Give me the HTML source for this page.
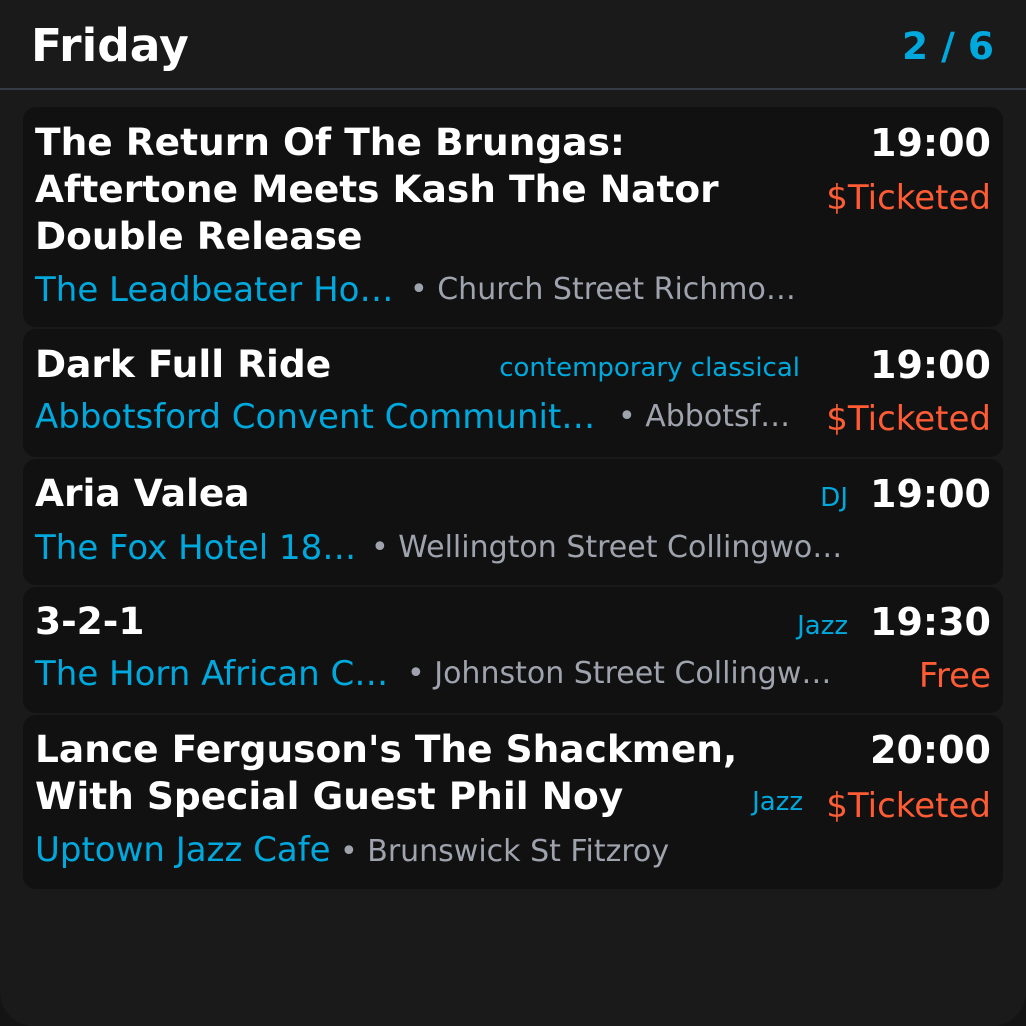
<!DOCTYPE html>
<html><head><meta charset="utf-8"><style>
html,body{margin:0;padding:0;background:#141414;}
#app{position:relative;width:1026px;height:1026px;background:#1a1a1a;border-radius:0 0 34px 34px;overflow:hidden;font-family:"DejaVu Sans","Liberation Sans",sans-serif;}
.hl{position:absolute;left:0;right:0;top:88px;height:2px;background:#363c47;}
.card{position:absolute;left:23px;width:980px;background:#111111;border-radius:13px;}
.t{position:absolute;white-space:nowrap;line-height:normal;}
.b{font-weight:bold;color:#fff;}
.ti{font-size:37.5px;}
.tm{font-size:38px;right:35px;}
.v{font-size:34px;color:#00a9dd;}
.a{font-size:30px;color:#9ea3ad;}
.p{font-size:34px;color:#ff5b35;right:35px;}
.g{font-size:26px;color:#00a9dd;}
</style></head><body><div id="app">
<div class="t b" style="left:31px;top:19px;font-size:45.5px;">Friday</div>
<div class="t b" style="right:32px;top:24px;font-size:37.5px;color:#00a9dd;">2 / 6</div>
<div class="hl"></div>

<div class="card" style="top:107px;height:220px"></div>
<div class="card" style="top:329px;height:128px"></div>
<div class="card" style="top:459px;height:126px"></div>
<div class="card" style="top:587px;height:126px"></div>
<div class="card" style="top:715px;height:174px"></div>

<div class="t b ti" style="left:35px;top:120px">The Return Of The Brungas:</div>
<div class="t b ti" style="left:35px;top:167px">Aftertone Meets Kash The Nator</div>
<div class="t b ti" style="left:35px;top:214px">Double Release</div>
<div class="t b tm" style="top:121px">19:00</div>
<div class="t p" style="top:178px">$Ticketed</div>
<div class="t v" style="left:35px;top:270px">The Leadbeater Ho…</div>
<div class="t a" style="left:410px;top:272px">• Church Street Richmo…</div>

<div class="t b ti" style="left:35px;top:342px">Dark Full Ride</div>
<div class="t g" style="right:226px;top:353px">contemporary classical</div>
<div class="t b tm" style="top:343px">19:00</div>
<div class="t v" style="left:35px;top:397px">Abbotsford Convent Communit…</div>
<div class="t a" style="left:618px;top:399px">• Abbotsf…</div>
<div class="t p" style="top:399px">$Ticketed</div>

<div class="t b ti" style="left:35px;top:471px">Aria Valea</div>
<div class="t g" style="right:178px;top:483px">DJ</div>
<div class="t b tm" style="top:472px">19:00</div>
<div class="t v" style="left:35px;top:528px">The Fox Hotel 18…</div>
<div class="t a" style="left:371px;top:530px">• Wellington Street Collingwo…</div>

<div class="t b ti" style="left:35px;top:599px">3-2-1</div>
<div class="t g" style="right:178px;top:611px">Jazz</div>
<div class="t b tm" style="top:600px">19:30</div>
<div class="t v" style="left:35px;top:654px">The Horn African C…</div>
<div class="t a" style="left:407px;top:656px">• Johnston Street Collingw…</div>
<div class="t p" style="top:656px">Free</div>

<div class="t b ti" style="left:35px;top:727px">Lance Ferguson's The Shackmen,</div>
<div class="t b ti" style="left:35px;top:774px">With Special Guest Phil Noy</div>
<div class="t b tm" style="top:728px">20:00</div>
<div class="t g" style="right:223px;top:787px">Jazz</div>
<div class="t p" style="top:786px">$Ticketed</div>
<div class="t v" style="left:35px;top:830px">Uptown Jazz Cafe</div>
<div class="t a" style="left:340px;top:834px">• Brunswick St Fitzroy</div>
</div></body></html>
